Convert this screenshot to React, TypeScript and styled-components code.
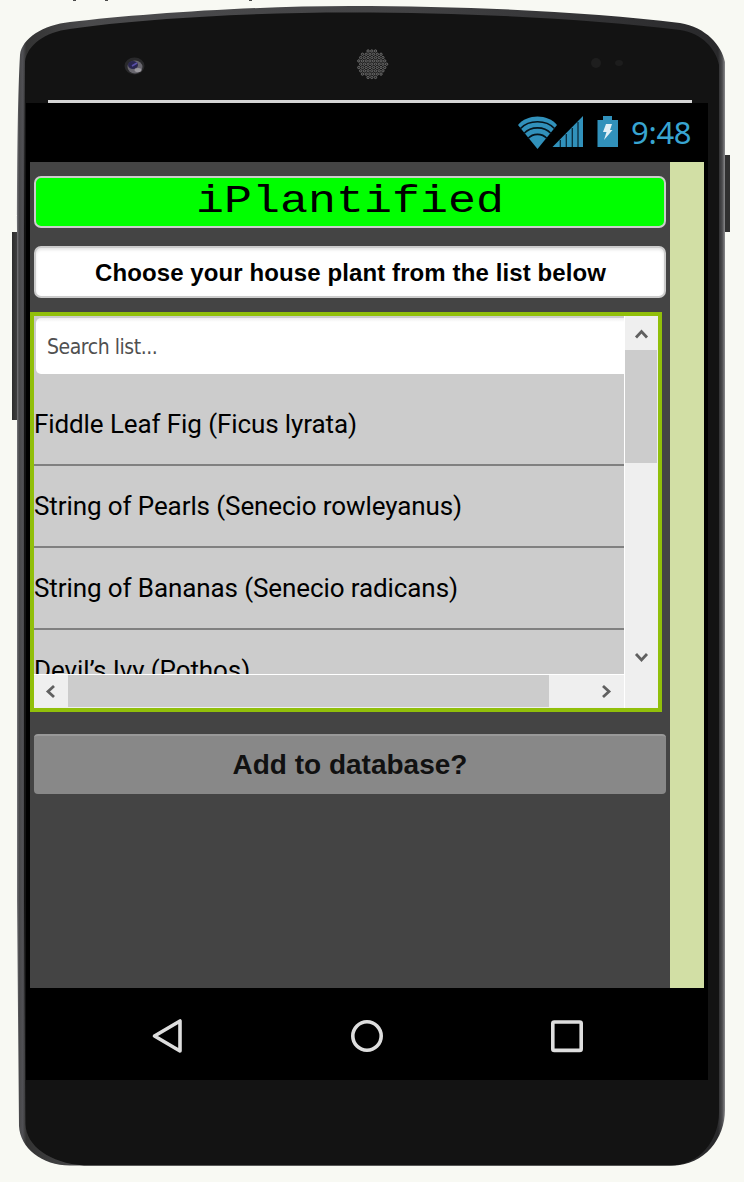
import React from "react";
import styled, { createGlobalStyle } from "styled-components";

const GlobalStyle = createGlobalStyle`
  body { margin: 0; background: #f8f9f3; }
  * { box-sizing: border-box; }
`;

const Stage = styled.main`
  position: relative;
  width: 744px;
  height: 1182px;
  overflow: hidden;
  background: #f8f9f3;
`;

const Shell = styled.svg`
  position: absolute;
  inset: 0;
  display: block;
`;

const Display = styled.div`
  position: relative;
  width: 682px;
  margin: 103px 0 0 26px;
  background: #000;
`;

const StatusBar = styled.header`
  display: flex;
  justify-content: flex-end;
  height: 59px;
  padding-right: 16px;
`;

const StatusIcons = styled.svg`
  display: block;
  width: 120px;
  height: 59px;
`;

const Clock = styled.span`
  width: 62px;
  padding-left: 1px;
  font: 31px/59px "Noto Sans", sans-serif;
  letter-spacing: -0.3px;
  color: #38a5d1;
  white-space: nowrap;
`;

const Screen = styled.section`
  display: flex;
  width: 674px;
  height: 826px;
  margin: 0 4px;
  background: #444;
`;

const Content = styled.div`
  display: flex;
  flex-direction: column;
  width: 640px;
  padding-top: 14px;
`;

const Gutter = styled.div`
  width: 34px;
  background: #d2dfa5;
`;

const Field = styled.div<{ $fill: string }>`
  width: 632px;
  height: 52px;
  margin: 0 4px 18px;
  border: 2px solid #ccc;
  border-radius: 7px;
  background: ${(p) => p.$fill};
  text-align: center;
  color: #000;
  white-space: nowrap;
`;

const Title = styled.h1`
  margin: 0;
  font: 38px/48px "Liberation Mono", monospace;
  transform: scaleX(1.228);
`;

const Prompt = styled.p`
  margin: 0;
  height: 48px;
  padding-left: 1px;
  border-radius: 5px;
  box-shadow: inset 0 2px 3px rgba(0, 0, 0, 0.1);
  font: bold 24px/49px "Liberation Sans", sans-serif;
  letter-spacing: 0.1px;
`;

const ListBox = styled.div`
  display: grid;
  grid-template-columns: 590px 34px;
  grid-template-rows: 358px 34px;
  width: 632px;
  height: 400px;
  margin-top: -4px;
  border: 4px solid #91bf0a;
  background: #efefef;
`;

const ListView = styled.div`
  overflow: hidden;
  background: #ccc;
  padding-top: 2px;
`;

const Search = styled.div`
  height: 56px;
  margin: 0 0 10px 2px;
  padding-left: 11px;
  border-radius: 5px 0 0 5px;
  background: linear-gradient(#eee, #fff 4px);
  font: 21px/58px "DejaVu Sans Condensed", "DejaVu Sans", sans-serif;
  font-stretch: condensed;
  letter-spacing: -0.45px;
  color: #505050;
`;

const Row = styled.div`
  height: 82px;
  border-bottom: 2px solid #808080;
  font: 26px/80px Roboto, sans-serif;
  letter-spacing: -0.1px;
  color: #000;
  white-space: nowrap;
`;

const ScrollBar = styled.div<{ $vertical?: boolean }>`
  display: flex;
  flex-direction: ${(p) => (p.$vertical ? "column" : "row")};
  grid-row: ${(p) => (p.$vertical ? "1 / 3" : "2")};
  grid-column: ${(p) => (p.$vertical ? "2" : "1")};
  ${(p) => (p.$vertical ? "border-left: 1px solid #fff;" : "border-top: 1px solid #fff;")}
`;

const Thumb = styled.div<{ $length: number; $vertical?: boolean }>`
  background: #ccc;
  ${(p) =>
    p.$vertical
      ? `height: ${p.$length}px; margin-right: 1px;`
      : `width: ${p.$length}px; margin-bottom: 1px;`}
`;

const Track = styled.div`
  flex: 1;
`;

const Arrow = styled.svg`
  display: block;
  width: 34px;
  height: 34px;
  flex: none;
  fill: none;
  stroke: #606060;
  stroke-width: 2.8;
`;

const Corner = styled.div`
  height: 34px;
`;

const AddButton = styled.button`
  width: 632px;
  height: 60px;
  margin: 22px 4px 0;
  padding: 0;
  border: 0;
  border-top: 2px solid #999;
  border-radius: 4px;
  background: #888;
  color: #111;
  font: bold 28px/58px "Liberation Sans", sans-serif;
`;

const NavBar = styled.nav`
  height: 92px;
`;

const NavIcons = styled.svg`
  display: block;
  fill: none;
  stroke: #dedede;
  stroke-width: 3.6;
  stroke-linejoin: round;
`;

const BODY =
  "M17 230 C17 150 18 90 20 55 C22 38 43 25 70 22 C140 14 250 6 350 6 C470 6 590 12 680 23 C706 27 722 46 725 62 V1110 C725 1138 705 1165.5 672 1165.5 H70 C42 1165.5 20 1148 19 1126 L17 900 Z";
const FACE =
  "M24 230 L25 62 C27 45 45 32 70 29 C140 19 250 12.5 350 12.5 C470 12.5 590 19 680 30 C702 33 716 49 719 65 V1112 C719 1140 700 1165.5 670 1165.5 H84 C50 1163 26 1146 25.5 1124 L24 900 Z";

const grille = Array.from({ length: 9 }, (_, r) =>
  Array.from({ length: 9 }, (_, c) => ({
    x: 357 + c * 3.7 + (r % 2 ? 1.8 : 0),
    y: 51 + r * 3.3,
  })),
)
  .flat()
  .filter((p) => Math.hypot(p.x - 372.5, p.y - 64.5) < 14.5);

function PhoneShell() {
  return (
    <Shell width="744" height="1182" viewBox="0 0 744 1182">
      <defs>
        <linearGradient id="rim" x1="17" x2="725" gradientUnits="userSpaceOnUse">
          <stop offset="0" stopColor="#77777b" />
          <stop offset="0.003" stopColor="#48484a" />
          <stop offset="0.008" stopColor="#505054" />
          <stop offset="0.013" stopColor="#333" />
          <stop offset="0.1" stopColor="#4a4a4c" />
          <stop offset="0.5" stopColor="#454547" />
          <stop offset="0.99" stopColor="#29292b" />
          <stop offset="0.996" stopColor="#4c4c4e" />
          <stop offset="1" stopColor="#8a8a8c" />
        </linearGradient>
        <linearGradient id="key">
          <stop offset="0" stopColor="#2c2c2c" />
          <stop offset="1" stopColor="#4a4a4a" />
        </linearGradient>
      </defs>
      <g fill="#4b4b4b">
        <rect x="73" width="3" height="1" />
        <rect x="105" width="3" height="1" />
        <rect x="249" width="3" height="1" />
      </g>
      <rect x="12" y="232" width="8" height="188" fill="url(#key)" />
      <rect x="723" y="155" width="7" height="77" fill="#303030" />
      <path d={BODY} fill="url(#rim)" />
      <path d={FACE} fill="#131313" />
      <ellipse cx="134.5" cy="66" rx="10" ry="8.5" fill="#29292b" />
      <ellipse cx="135" cy="67" rx="7.5" ry="6.5" fill="#68666e" />
      <ellipse cx="133" cy="65" rx="5" ry="4" fill="#29264e" />
      <path d="M132 66 L137 63" stroke="#5a50a8" strokeWidth="1.5" />
      <ellipse cx="138" cy="70" rx="3.5" ry="2" fill="#9a989e" />
      {grille.map((p, i) => (
        <circle key={i} cx={p.x} cy={p.y} r="1.2" fill="#242424" stroke="#707070" strokeWidth="0.9" />
      ))}
      <circle cx="596" cy="63" r="5" fill="#1e1e1e" />
      <ellipse cx="619" cy="63" rx="4" ry="3" fill="#1d1d1d" />
      <rect x="48" y="100" width="644" height="3" fill="#d5d5d5" />
    </Shell>
  );
}

const plants = [
  "Fiddle Leaf Fig (Ficus lyrata)",
  "String of Pearls (Senecio rowleyanus)",
  "String of Bananas (Senecio radicans)",
  "Devil’s Ivy (Pothos)",
];

export default function App() {
  return (
    <Stage>
      <GlobalStyle />
      <PhoneShell />
      <Display>
        <StatusBar>
          <StatusIcons viewBox="510 103 120 59" fill="#3191bb">
            <path d="M518 125 C527 113.5 548 113.5 557 125 L537.5 149 Z" />
            <path
              d="M520.5 128.5 C529 119.5 546 119.5 554.5 128.5 M524 133.5 C531 126 544 126 551 133.5 M528 138.5 C533 133 542 133 547 138.5"
              fill="none"
              stroke="#06141c"
              strokeWidth="1.7"
            />
            <path d="M552.5 147 L583 116 V147 Z" />
            <path d="M560.3 140 V147 M566.3 134 V147 M572.3 128 V147 M578 122 V147" stroke="#0a2b3c" strokeWidth="1.3" />
            <path d="M597.5 120 H603 V116 H612 V120 H618 V147 H597.5 Z" />
            <path d="M606 124 L612 124 L610 130 H612.5 L604 140 L606.5 132 H603 Z" fill="#e1eff6" />
          </StatusIcons>
          <Clock>9:48</Clock>
        </StatusBar>
        <Screen>
          <Content>
            <Field $fill="#00ff00">
              <Title>iPlantified</Title>
            </Field>
            <Field $fill="#ffffff">
              <Prompt>Choose your house plant from the list below</Prompt>
            </Field>
            <ListBox>
              <ListView>
                <Search>Search list...</Search>
                {plants.map((name) => (
                  <Row key={name}>{name}</Row>
                ))}
              </ListView>
              <ScrollBar $vertical>
                <Arrow viewBox="0.5 0.5 34 34">
                  <path d="M11.5 22 L17 16 L22.5 22" />
                </Arrow>
                <Thumb $vertical $length={113} />
                <Track />
                <Arrow viewBox="0.5 0 34 34">
                  <path d="M11.5 14 L17 20 L22.5 14" />
                </Arrow>
                <Corner />
              </ScrollBar>
              <ScrollBar>
                <Arrow viewBox="0 0.5 34 34">
                  <path d="M20 11.5 L14 17 L20 22.5" />
                </Arrow>
                <Thumb $length={481} />
                <Track />
                <Arrow viewBox="0 0.5 34 34">
                  <path d="M13 11.5 L19 17 L13 22.5" />
                </Arrow>
              </ScrollBar>
            </ListBox>
            <AddButton>Add to database?</AddButton>
          </Content>
          <Gutter />
        </Screen>
        <NavBar>
          <NavIcons width="682" height="92" viewBox="26 988 682 92">
            <path d="M154.5 1036 L180 1021 V1051 Z" />
            <circle cx="367" cy="1036" r="14.2" />
            <rect x="552.8" y="1022" width="28.4" height="28.4" rx="1.5" />
          </NavIcons>
        </NavBar>
      </Display>
    </Stage>
  );
}
